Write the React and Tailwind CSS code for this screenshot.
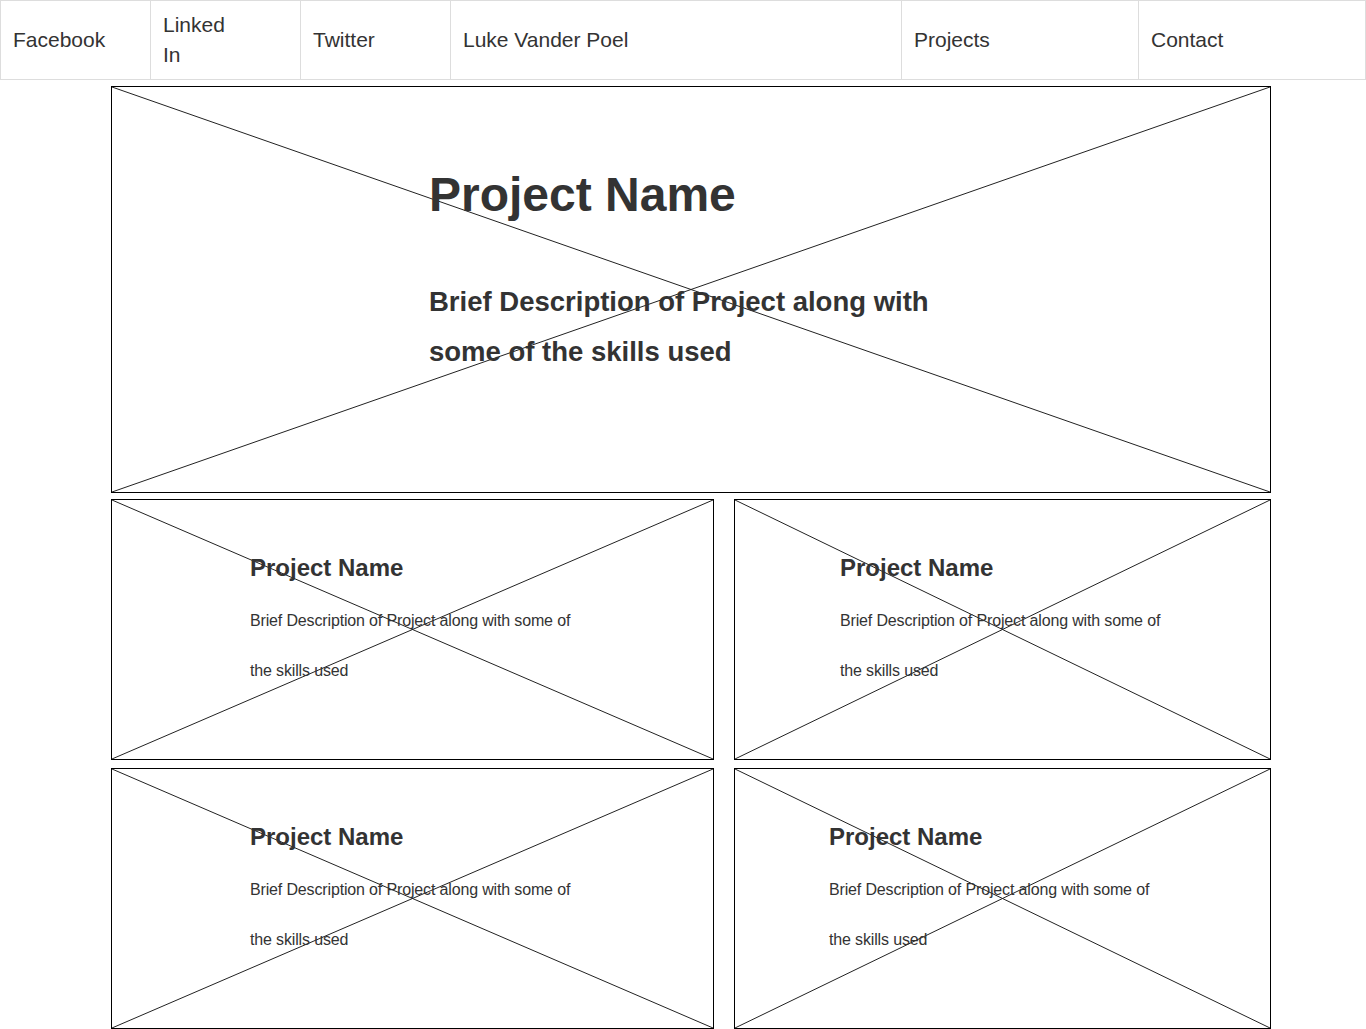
import React from "react";

const links = [
  { label: "Facebook", w: "w-[150px]" },
  { label: "Linked In", w: "w-[150px]", narrow: true },
  { label: "Twitter", w: "w-[150px]" },
  { label: "Luke Vander Poel", w: "w-[451px]" },
  { label: "Projects", w: "w-[237px]" },
  { label: "Contact", w: "flex-1" },
];

function Cross() {
  return (
    <svg
      className="absolute inset-0 w-full h-full pointer-events-none"
      preserveAspectRatio="none"
      viewBox="0 0 100 100"
    >
      <line x1="0" y1="0" x2="100" y2="100" stroke="#222" strokeWidth="1" vectorEffect="non-scaling-stroke" />
      <line x1="100" y1="0" x2="0" y2="100" stroke="#222" strokeWidth="1" vectorEffect="non-scaling-stroke" />
    </svg>
  );
}

function Card({ width, pad }) {
  return (
    <div className={`relative border border-black h-[261px] ${width}`}>
      <Cross />
      <div className={`relative pt-[54px] ${pad}`}>
        <h3 className="text-[24px] leading-[28px] font-bold">Project Name</h3>
        <p className="mt-[14px] w-[330px] text-[16px] leading-[50px] tracking-[-0.15px]">
          Brief Description of Project along with some of the skills used
        </p>
      </div>
    </div>
  );
}

export default function App() {
  return (
    <div className="bg-white text-[#333] font-['Liberation_Sans',Arial,sans-serif] min-h-[1029px]">
      {/* Nav */}
      <nav className="flex h-[80px] border border-[#ddd]">
        {links.map((l, i) => (
          <div
            key={l.label}
            className={`${l.w} flex items-center px-3 text-[21px] ${i < links.length - 1 ? "border-r border-[#ddd]" : ""}`}
          >
            {l.narrow ? (
              <span className="w-[70px] leading-[30px]">{l.label}</span>
            ) : (
              <span>{l.label}</span>
            )}
          </div>
        ))}
      </nav>

      <div className="ml-[111px] w-[1160px] pt-[6px]">
        {/* Hero */}
        <div className="relative border border-black h-[407px]">
          <Cross />
          <div className="relative pl-[317px] pt-[80px]">
            <h1 className="text-[48px] leading-[56px] font-bold">Project Name</h1>
            <p className="mt-[54px] w-[530px] text-[27.5px] leading-[50px] font-bold">
              Brief Description of Project along with some of the skills used
            </p>
          </div>
        </div>

        <div className="flex gap-[20px] mt-[6px]">
          <Card width="w-[603px]" pad="pl-[138px]" />
          <Card width="flex-1" pad="pl-[105px]" />
        </div>
        <div className="flex gap-[20px] mt-[8px]">
          <Card width="w-[603px]" pad="pl-[138px]" />
          <Card width="flex-1" pad="pl-[94px]" />
        </div>
      </div>
    </div>
  );
}
